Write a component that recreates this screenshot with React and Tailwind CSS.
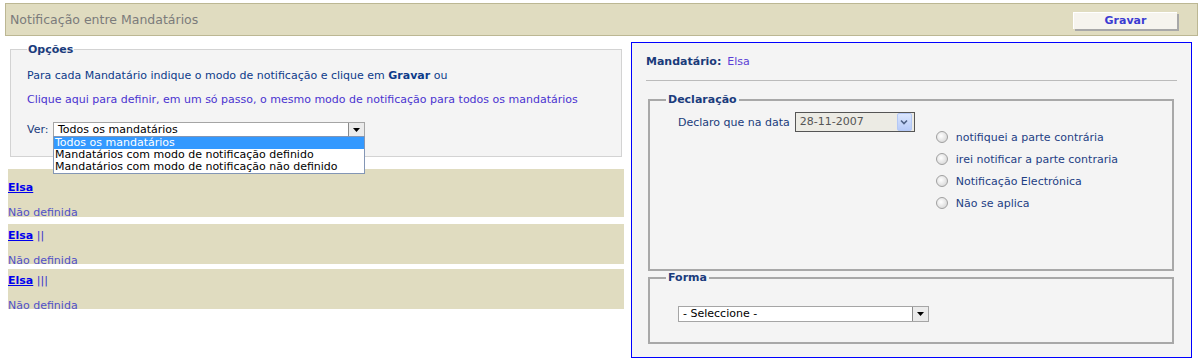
export default function App() {
  const rows = [
    { extra: "", first: true },
    { extra: "||" },
    { extra: "|||" },
  ];

  return (
    <div className="w-[1199px] h-[364px] bg-white font-['DejaVu_Sans',Verdana,sans-serif] text-[11px] leading-[13px] overflow-hidden">
      {/* Barra de título */}
      <header className="ml-[5px] mt-[3px] w-[1193px] h-[33px] bg-[#e0dcc0] border border-[#bcb793] flex items-center justify-between pl-[4px] pr-[20px]">
        <h1 className="text-[12.5px] leading-[16px] text-[#7b7b7b] font-normal">Notificação entre Mandatários</h1>
        <button className="w-[104px] h-[17px] mt-[1px] bg-[#f6f4ee] border-t border-l border-white shadow-[2px_2px_0_#a8a8a8] text-[11px] leading-[15px] font-bold text-[#3b3bd2]">
          Gravar
        </button>
      </header>

      <div className="flex items-start">
        {/* Coluna esquerda */}
        <div className="ml-[8px] w-[616px] pt-[7px]">
          <fieldset className="ml-[2px] w-[612px] border border-[#d3d3d3] bg-[#f4f4f4] pl-[16px] pr-[10px] pt-[13px] pb-[19px]">
            <legend className="px-[1px] font-bold text-[#1b3c7d]">Opções</legend>
            <p className="text-[#0d3b8a]">
              Para cada Mandatário indique o modo de notificação e clique em <b>Gravar</b> ou
            </p>
            <p className="mt-[11px] text-[#4a33d0] cursor-pointer">
              Clique aqui para definir, em um só passo, o mesmo modo de notificação para todos os mandatários
            </p>
            <div className="mt-[16px] flex items-center h-[15px]">
              <span className="w-[26px] text-[#1b3c7d]">Ver:</span>
              <div className="relative w-[312px] h-[15px] border border-[#a5a5a5] bg-white">
                <div className="pl-[4px] text-black leading-[13px]">Todos os mandatários</div>
                <div className="absolute right-0 top-0 w-[16px] h-[13px] border-l border-[#8a8a8a] bg-[#ebebeb] flex items-center justify-center">
                  <svg width="7" height="4" viewBox="0 0 7 4">
                    <path d="M0 0h7L3.5 4z" fill="#000" />
                  </svg>
                </div>
                <ul className="absolute left-[-1px] top-full w-[312px] border border-[#8396b5] bg-white z-10 text-black">
                  <li className="h-[12px] leading-[12px] pl-[1px] bg-[#3399ff] text-white">Todos os mandatários</li>
                  <li className="h-[12px] leading-[12px] pl-[1px]">Mandatários com modo de notificação definido</li>
                  <li className="h-[12px] leading-[12px] pl-[1px]">Mandatários com modo de notificação não definido</li>
                </ul>
              </div>
            </div>
          </fieldset>

          {rows.map((r, i) => (
            <div
              key={i}
              className={
                r.first
                  ? "mt-[12px] h-[48px] pt-[12px] bg-[#e0dcc0]"
                  : i === 1
                  ? "mt-[7px] h-[40px] pt-[5px] bg-[#e0dcc0]"
                  : "mt-[5px] h-[40px] pt-[5px] bg-[#e0dcc0]"
              }
            >
              <div>
                <a href="#" className="font-bold underline text-[#0000ee]">Elsa</a>
                {r.extra && <span className="text-[#3535cf]"> {r.extra}</span>}
              </div>
              <div className="mt-[12px] text-[#5050c8]">Não definida</div>
            </div>
          ))}
        </div>

        {/* Painel direito */}
        <div className="ml-[7px] mt-[6px] w-[561px] h-[316px] border border-[#0000ff] bg-[#f4f4f4] pt-[12px] px-[14px]">
          <div className="flex">
            <span className="font-bold text-[#1a3b7a]">Mandatário:</span>
            <span className="ml-[6px] text-[#5b3fd6]">Elsa</span>
          </div>
          <div className="mt-[12px] border-t border-[#bbbbbb]" />

          <fieldset className="mt-[12px] ml-[2px] mr-[3px] h-[178px] border-2 border-[#a8a8a8] pl-[16px]">
            <legend className="px-[2px] font-bold text-[#1b3c7d]">Declaração</legend>
            <div className="ml-[12px] pt-[6px] flex items-start">
              <div className="flex items-center h-[20px]">
                <span className="text-[#1a3c7c]">Declaro que na data</span>
                <div className="relative ml-[5px] w-[120px] h-[20px] border border-[#555] bg-[#ecebe4]">
                  <div className="pl-[4px] leading-[18px] text-[#555]">28-11-2007</div>
                  <div className="absolute right-[2px] top-0 w-[15px] h-[18px] rounded-[2px] border border-[#b4c8f5] bg-gradient-to-b from-[#dbe6fd] to-[#b7cbf8] flex items-center justify-center">
                    <svg width="8" height="6" viewBox="0 0 8 6">
                      <path d="M1 1.5l3 3 3-3" stroke="#4d6185" strokeWidth="1.6" fill="none" />
                    </svg>
                  </div>
                </div>
              </div>
              <div className="ml-[21px] pt-[14px] flex flex-col">
                {["notifiquei a parte contrária", "irei notificar a parte contraria", "Notificação Electrónica", "Não se aplica"].map((t) => (
                  <label key={t} className="flex items-center h-[22px] text-[#1e3f84]">
                    <span className="w-[12px] h-[12px] rounded-full border border-[#a0a0a0] bg-[radial-gradient(circle_at_40%_40%,#ffffff,#cfcfcf)]" />
                    <span className="ml-[8px]">{t}</span>
                  </label>
                ))}
              </div>
            </div>
          </fieldset>

          <fieldset className="ml-[2px] mr-[3px] h-[73px] border-2 border-[#a8a8a8] pl-[16px]">
            <legend className="px-[2px] font-bold text-[#1b3c7d]">Forma</legend>
            <div className="ml-[12px] mt-[22px] relative w-[251px] h-[16px] border border-[#a5a5a5] bg-white">
              <div className="pl-[4px] leading-[14px] text-black">- Seleccione -</div>
              <div className="absolute right-0 top-0 w-[16px] h-[14px] border-l border-[#8a8a8a] bg-[#ebebeb] flex items-center justify-center">
                <svg width="7" height="4" viewBox="0 0 7 4">
                  <path d="M0 0h7L3.5 4z" fill="#000" />
                </svg>
              </div>
            </div>
          </fieldset>
        </div>
      </div>
    </div>
  );
}
